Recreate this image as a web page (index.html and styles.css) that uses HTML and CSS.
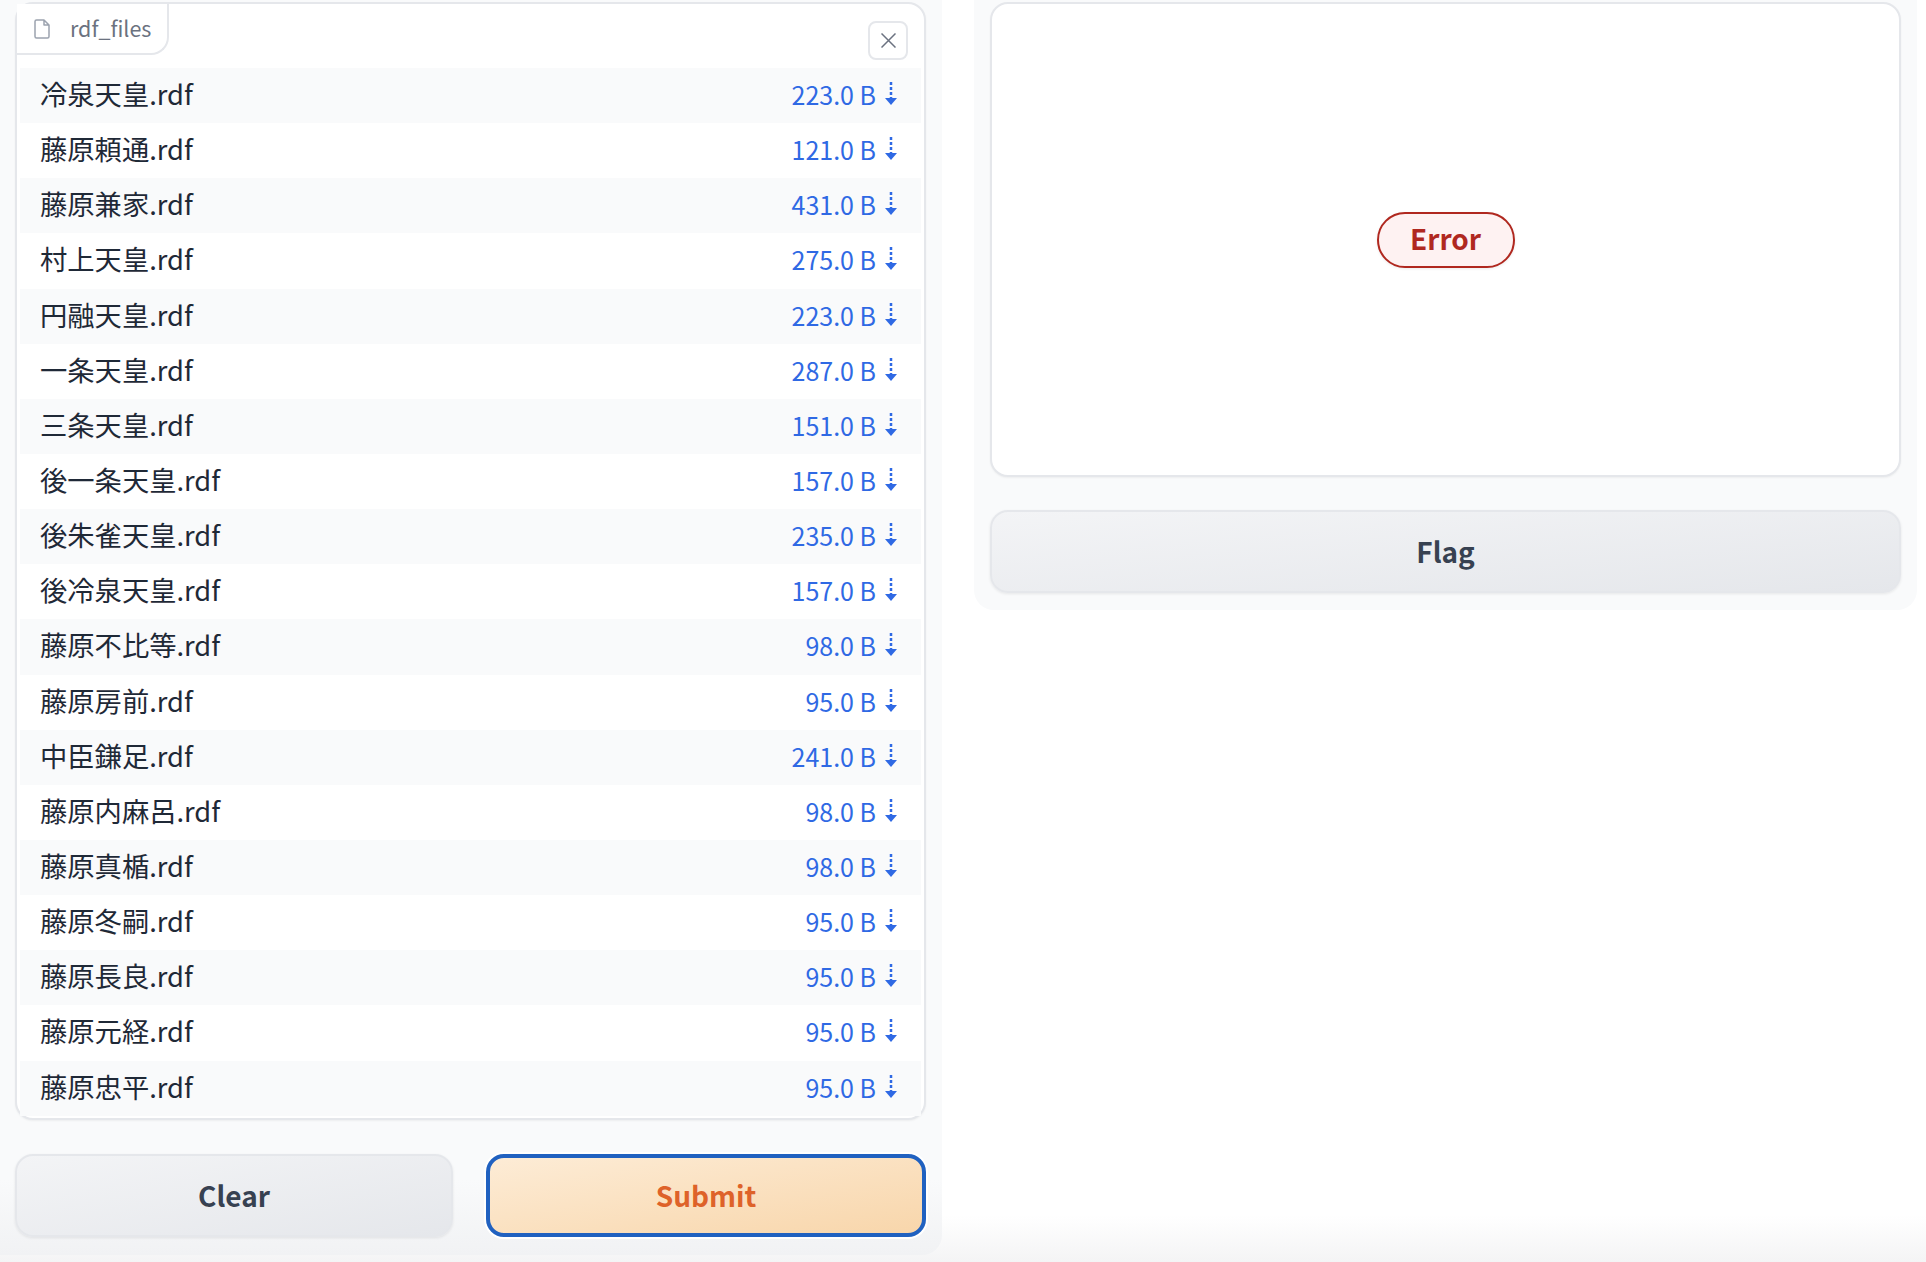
FILE: index.html
```html
<!DOCTYPE html>
<html lang="ja">
<head>
<meta charset="utf-8">
<title>rdf_files</title>
<link rel="stylesheet" href="styles.css">
</head>
<body>
<main class="layout">
  <section class="panel panel-left">
    <div class="file-card">
      <div class="file-label">
        <svg class="file-icon" viewBox="0 0 16 20" aria-hidden="true"><path d="M1 2.500a1.500 1.500 0 0 1 1.500-1.500h7.500l5 5v11.500a1.500 1.500 0 0 1-1.500 1.500h-11a1.500 1.500 0 0 1-1.500-1.500zM10 1v5h5"/></svg>
        <span>rdf_files</span>
      </div>
      <button class="close-btn" aria-label="Clear"><svg viewBox="0 0 15 15" aria-hidden="true"><path d="M0.500 0.500l14 14M14.500 0.500l-14 14"/></svg></button>
      <div class="file-list">
        <div class="file-row"><span class="name">冷泉天皇.rdf</span><a class="size">223.0 B <svg class="dl" viewBox="0 0 12 23"><path class="dash" d="M6 0v17"/><path class="head" d="M0 16h12l-6 7z"/></svg></a></div>
        <div class="file-row"><span class="name">藤原頼通.rdf</span><a class="size">121.0 B <svg class="dl" viewBox="0 0 12 23"><path class="dash" d="M6 0v17"/><path class="head" d="M0 16h12l-6 7z"/></svg></a></div>
        <div class="file-row"><span class="name">藤原兼家.rdf</span><a class="size">431.0 B <svg class="dl" viewBox="0 0 12 23"><path class="dash" d="M6 0v17"/><path class="head" d="M0 16h12l-6 7z"/></svg></a></div>
        <div class="file-row"><span class="name">村上天皇.rdf</span><a class="size">275.0 B <svg class="dl" viewBox="0 0 12 23"><path class="dash" d="M6 0v17"/><path class="head" d="M0 16h12l-6 7z"/></svg></a></div>
        <div class="file-row"><span class="name">円融天皇.rdf</span><a class="size">223.0 B <svg class="dl" viewBox="0 0 12 23"><path class="dash" d="M6 0v17"/><path class="head" d="M0 16h12l-6 7z"/></svg></a></div>
        <div class="file-row"><span class="name">一条天皇.rdf</span><a class="size">287.0 B <svg class="dl" viewBox="0 0 12 23"><path class="dash" d="M6 0v17"/><path class="head" d="M0 16h12l-6 7z"/></svg></a></div>
        <div class="file-row"><span class="name">三条天皇.rdf</span><a class="size">151.0 B <svg class="dl" viewBox="0 0 12 23"><path class="dash" d="M6 0v17"/><path class="head" d="M0 16h12l-6 7z"/></svg></a></div>
        <div class="file-row"><span class="name">後一条天皇.rdf</span><a class="size">157.0 B <svg class="dl" viewBox="0 0 12 23"><path class="dash" d="M6 0v17"/><path class="head" d="M0 16h12l-6 7z"/></svg></a></div>
        <div class="file-row"><span class="name">後朱雀天皇.rdf</span><a class="size">235.0 B <svg class="dl" viewBox="0 0 12 23"><path class="dash" d="M6 0v17"/><path class="head" d="M0 16h12l-6 7z"/></svg></a></div>
        <div class="file-row"><span class="name">後冷泉天皇.rdf</span><a class="size">157.0 B <svg class="dl" viewBox="0 0 12 23"><path class="dash" d="M6 0v17"/><path class="head" d="M0 16h12l-6 7z"/></svg></a></div>
        <div class="file-row"><span class="name">藤原不比等.rdf</span><a class="size">98.0 B <svg class="dl" viewBox="0 0 12 23"><path class="dash" d="M6 0v17"/><path class="head" d="M0 16h12l-6 7z"/></svg></a></div>
        <div class="file-row"><span class="name">藤原房前.rdf</span><a class="size">95.0 B <svg class="dl" viewBox="0 0 12 23"><path class="dash" d="M6 0v17"/><path class="head" d="M0 16h12l-6 7z"/></svg></a></div>
        <div class="file-row"><span class="name">中臣鎌足.rdf</span><a class="size">241.0 B <svg class="dl" viewBox="0 0 12 23"><path class="dash" d="M6 0v17"/><path class="head" d="M0 16h12l-6 7z"/></svg></a></div>
        <div class="file-row"><span class="name">藤原内麻呂.rdf</span><a class="size">98.0 B <svg class="dl" viewBox="0 0 12 23"><path class="dash" d="M6 0v17"/><path class="head" d="M0 16h12l-6 7z"/></svg></a></div>
        <div class="file-row"><span class="name">藤原真楯.rdf</span><a class="size">98.0 B <svg class="dl" viewBox="0 0 12 23"><path class="dash" d="M6 0v17"/><path class="head" d="M0 16h12l-6 7z"/></svg></a></div>
        <div class="file-row"><span class="name">藤原冬嗣.rdf</span><a class="size">95.0 B <svg class="dl" viewBox="0 0 12 23"><path class="dash" d="M6 0v17"/><path class="head" d="M0 16h12l-6 7z"/></svg></a></div>
        <div class="file-row"><span class="name">藤原長良.rdf</span><a class="size">95.0 B <svg class="dl" viewBox="0 0 12 23"><path class="dash" d="M6 0v17"/><path class="head" d="M0 16h12l-6 7z"/></svg></a></div>
        <div class="file-row"><span class="name">藤原元経.rdf</span><a class="size">95.0 B <svg class="dl" viewBox="0 0 12 23"><path class="dash" d="M6 0v17"/><path class="head" d="M0 16h12l-6 7z"/></svg></a></div>
        <div class="file-row"><span class="name">藤原忠平.rdf</span><a class="size">95.0 B <svg class="dl" viewBox="0 0 12 23"><path class="dash" d="M6 0v17"/><path class="head" d="M0 16h12l-6 7z"/></svg></a></div>
      </div>
    </div>
    <div class="actions">
      <button class="btn btn-secondary">Clear</button>
      <button class="btn btn-primary">Submit</button>
    </div>
  </section>
  <section class="panel panel-right">
    <div class="output-card"><span class="error-pill">Error</span></div>
    <button class="btn btn-secondary btn-flag">Flag</button>
  </section>
</main>
</body>
</html>
```
FILE: styles.css
```css
* { box-sizing: border-box; }
html, body { margin: 0; height: 100%; }
body {
  width: 1926px;
  height: 1262px;
  overflow: hidden;
  background: linear-gradient(to bottom, #fff 0, #fff 1215px, #f4f4f5 1262px);
  font-family: "Noto Sans CJK JP", "Noto Sans", sans-serif;
  color: #1f2937;
}
.layout {
  display: grid;
  grid-template-columns: 942px 943px;
  column-gap: 32px;
  align-items: start;
  padding-right: 9px;
}
.panel {
  background: #f9fafb;
  border-radius: 0 0 20px 20px;
  padding: 2px 16px 16px;
}
.panel-left {
  padding-left: 15px;
  height: 1255px;
  background: linear-gradient(to bottom, #f9fafb 1180px, #f1f2f4 1255px);
  border-radius: 0 0 20px 0;
}
.panel-right { height: 610px; }
.file-card {
  position: relative;
  background: #fff;
  border: 2px solid #e5e7eb;
  border-radius: 18px;
  height: 1118px;
  padding: 0 3px;
  box-shadow: 0 1px 2px rgba(0,0,0,.05);
}
.file-label {
  display: flex;
  align-items: center;
  width: 152px;
  height: 51px;
  margin-left: -3px;
  padding-left: 17px;
  gap: 20px;
  font-size: 21.500px;
  color: #6b7280;
  background: #fff;
  border-right: 2px solid #e5e7eb;
  border-bottom: 2px solid #e5e7eb;
  border-radius: 0 0 18px 0;
}
.file-label span { position: relative; top: -1px; }
.file-icon { width: 16px; height: 20px; flex: none; }
.file-icon path { fill: none; stroke: #9ca3af; stroke-width: 1.5; stroke-linejoin: round; }
.close-btn {
  position: absolute;
  top: 17px;
  right: 16px;
  width: 40px;
  height: 39px;
  padding: 0;
  display: flex;
  align-items: center;
  justify-content: center;
  background: #fff;
  border: 2px solid #e5e7eb;
  border-radius: 8px;
}
.close-btn svg { width: 15px; height: 15px; }
.close-btn path { fill: none; stroke: #6b7280; stroke-width: 1.5; }
.file-list { margin-top: 13px; }
.file-row {
  display: flex;
  justify-content: space-between;
  align-items: center;
  height: 55.150px;
  padding: 0 24px 3px 20px;
  font-size: 27.300px;
}
.file-row:nth-child(odd) { background: #f9fafb; }
.name { color: #1f2937; margin-bottom: 2px; }
.size {
  display: flex;
  align-items: center;
  gap: 9px;
  color: #2f69e4;
  font-size: 25px;
}
.dl { width: 12px; height: 23px; margin-top: -1px; }
.dash { stroke: #2f69e4; stroke-width: 2.500; stroke-dasharray: 3 2; fill: none; }
.head { fill: #2f69e4; }
.actions {
  display: grid;
  grid-template-columns: 438px 440px;
  column-gap: 33px;
  margin-top: 34px;
}
.btn {
  display: block;
  width: 100%;
  height: 83px;
  padding: 0 0 1px;
  border-radius: 18px;
  font-family: inherit;
  font-size: 28px;
  font-weight: 700;
  box-shadow: 0 1px 3px rgba(0,0,0,.08);
}
.btn-secondary {
  color: #374151;
  background: linear-gradient(to bottom right, #f3f4f6, #e5e7eb);
  border: 2px solid #e5e7eb;
}
.btn-primary {
  color: #de6229;
  background: linear-gradient(to bottom right, #fdecd6, #f8d6ab);
  border: 4px solid #2061c0;
  box-shadow: 0 0 0 2px #fff;
}
.output-card {
  display: flex;
  align-items: center;
  justify-content: center;
  height: 475px;
  background: #fff;
  border: 2px solid #e5e7eb;
  border-radius: 18px;
  box-shadow: 0 1px 2px rgba(0,0,0,.05);
}
.error-pill {
  display: flex;
  align-items: center;
  justify-content: center;
  width: 138px;
  height: 56px;
  padding-bottom: 3px;
  font-size: 28px;
  font-weight: 700;
  color: #b0281f;
  background: #fef2f2;
  border: 2px solid #b0281f;
  border-radius: 28px;
  box-shadow: 0 1px 3px rgba(0,0,0,.08);
}
.btn-flag { margin-top: 33px; }
```
